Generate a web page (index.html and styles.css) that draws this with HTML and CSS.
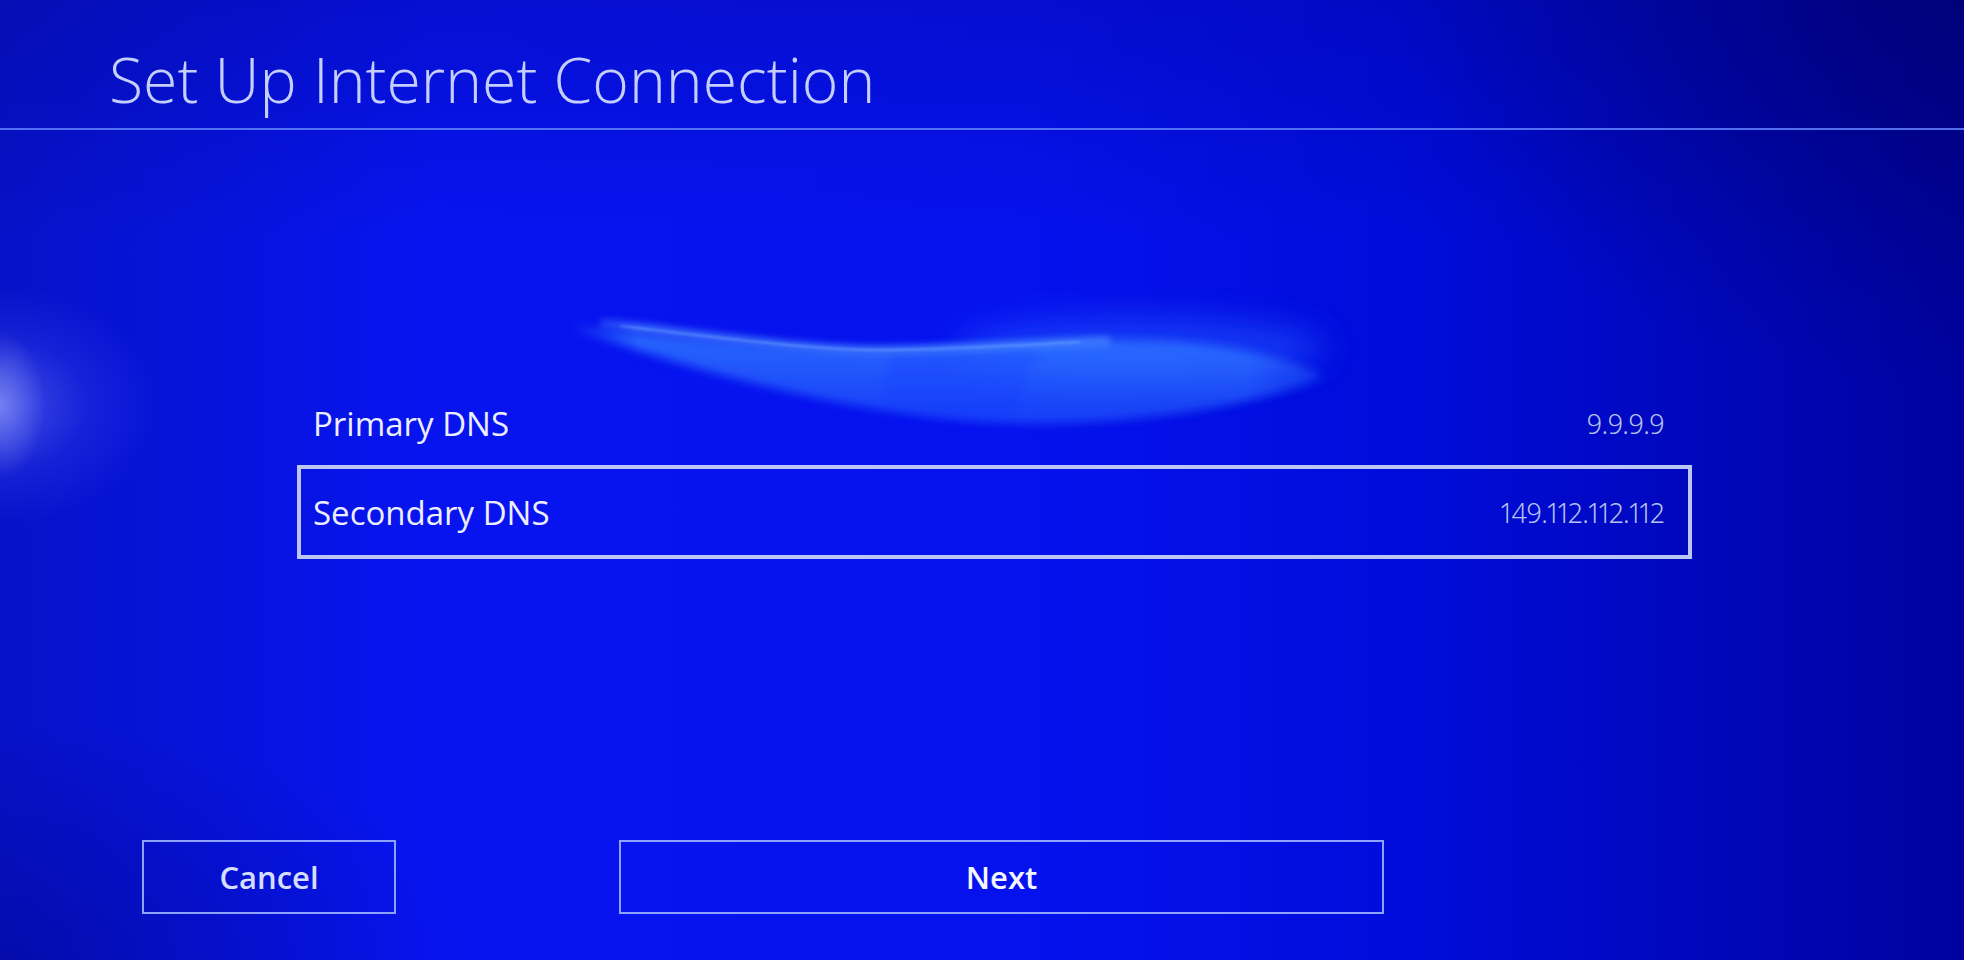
FILE: index.html
```html
<!DOCTYPE html>
<html lang="en">
<head>
<meta charset="utf-8">
<title>Set Up Internet Connection</title>
<link rel="stylesheet" href="styles.css">
</head>
<body>
<svg class="wave" width="1964" height="960" viewBox="0 0 1964 960" aria-hidden="true">
  <defs>
    <filter id="blurBig" x="-50%" y="-50%" width="200%" height="200%"><feGaussianBlur stdDeviation="16"/></filter>
    <filter id="blurMid" x="-20%" y="-50%" width="140%" height="200%"><feGaussianBlur stdDeviation="5"/></filter>
    <filter id="blurSoft" x="-10%" y="-50%" width="120%" height="200%"><feGaussianBlur stdDeviation="3"/></filter>
    <filter id="blurSmall" x="-10%" y="-50%" width="120%" height="200%"><feGaussianBlur stdDeviation="1"/></filter>
    <linearGradient id="lensFill" x1="0" y1="0" x2="0" y2="1">
      <stop offset="0" stop-color="#2e74ff" stop-opacity="0.9"/>
      <stop offset="0.6" stop-color="#2a6aff" stop-opacity="0.7"/>
      <stop offset="1" stop-color="#2462ff" stop-opacity="0.55"/>
    </linearGradient>
    <linearGradient id="lensFade" x1="0" y1="0" x2="1" y2="0">
      <stop offset="0" stop-color="#fff" stop-opacity="0"/>
      <stop offset="0.1" stop-color="#fff" stop-opacity="1"/>
      <stop offset="0.88" stop-color="#fff" stop-opacity="1"/>
      <stop offset="1" stop-color="#fff" stop-opacity="0.4"/>
    </linearGradient>
    <mask id="lensMask" maskUnits="userSpaceOnUse" x="0" y="0" width="1964" height="960">
      <rect x="560" y="280" width="780" height="160" fill="url(#lensFade)"/>
    </mask>
  </defs>
  <ellipse cx="1140" cy="348" rx="185" ry="30" fill="#2454ff" opacity="0.6" filter="url(#blurBig)"/>
  <g mask="url(#lensMask)">
    <path d="M575,326 C700,340 820,352 892,350 C1000,347 1100,334 1200,344 C1260,351 1300,362 1325,377 C1250,410 1100,428 1000,423 C850,415 700,372 575,330 Z" fill="url(#lensFill)" filter="url(#blurMid)"/>
    <path d="M892,352 C960,350 1000,348 1040,346 L1010,420 C960,420 920,415 880,408 Z" fill="#0a30ff" opacity="0.18" filter="url(#blurMid)"/>
    <path d="M600,323 C720,337 820,352 892,350 C960,349 1040,344 1110,341" fill="none" stroke="#4c8cff" stroke-opacity="0.6" stroke-width="10" filter="url(#blurSoft)"/>
    <path d="M620,326 C730,339 820,351 892,350 C960,349 1020,345 1080,342" fill="none" stroke="#78b0ff" stroke-opacity="0.45" stroke-width="2.5" filter="url(#blurSmall)"/>
  </g>
</svg>

<header class="title-bar">
  <h1 class="title">Set Up Internet Connection</h1>
</header>

<main class="settings">
  <ul class="dns-list">
    <li class="dns-row">
      <span class="dns-label">Primary DNS</span>
      <span class="dns-value">9.9.9.9</span>
    </li>
    <li class="dns-row is-selected">
      <span class="dns-label">Secondary DNS</span>
      <span class="dns-value">149.112.112.112</span>
    </li>
  </ul>
</main>

<footer class="actions">
  <button class="btn btn-cancel" type="button">Cancel</button>
  <button class="btn btn-next" type="button">Next</button>
</footer>
</body>
</html>
```

FILE: styles.css
```css
html, body {
  margin: 0;
  padding: 0;
}

body {
  position: relative;
  width: 1964px;
  height: 960px;
  overflow: hidden;
  font-family: "Open Sans", "Noto Sans", "Liberation Sans", sans-serif;
  color: #e8ecff;
  background:
    radial-gradient(ellipse 45px 75px at 0px 405px, rgba(175, 185, 255, 0.45), rgba(175, 185, 255, 0) 100%),
    radial-gradient(ellipse 160px 120px at 0px 405px, rgba(115, 130, 255, 0.55), rgba(80, 95, 255, 0.2) 55%, rgba(40, 50, 255, 0) 100%),
    radial-gradient(ellipse 760px 520px at 1964px 0px, rgba(0, 0, 100, 0.55), rgba(0, 0, 100, 0) 75%),
    radial-gradient(ellipse 600px 300px at 0px 960px, rgba(0, 0, 120, 0.35), rgba(0, 0, 120, 0) 80%),
    linear-gradient(180deg, rgba(0, 0, 120, 0.25) 0%, rgba(0, 0, 120, 0) 25%),
    linear-gradient(90deg, #0612c8 0%, #0714f0 22%, #0612ee 52%, #000cda 72%, #0006b4 90%, #00029e 100%);
}

.wave {
  position: absolute;
  left: 0;
  top: 0;
  pointer-events: none;
}

.title-bar {
  position: relative;
  height: 130px;
  padding: 0 0 0 109px;
  box-sizing: border-box;
  border-bottom: 2px solid rgba(95, 130, 255, 0.85);
}

.title {
  margin: 0;
  padding-top: 48px;
  font-size: 62.5px;
  line-height: 62px;
  font-weight: 300;
  color: #c4ceff;
  letter-spacing: 0;
}

.settings {
  position: relative;
  margin: 241px 0 0 297px;
  width: 1395px;
}

.dns-list {
  list-style: none;
  margin: 0;
  padding: 0;
}

.dns-row {
  display: flex;
  align-items: center;
  justify-content: space-between;
  height: 94px;
  box-sizing: border-box;
  padding: 0 24px 0 12px;
  border: 4px solid transparent;
}

.dns-row:first-child .dns-label,
.dns-row:first-child .dns-value {
  position: relative;
  top: 5px;
}

.dns-row.is-selected {
  border-color: #bcc6f2;
}

.dns-label {
  font-size: 33px;
  font-weight: 400;
  color: #eceeff;
}

.dns-value {
  font-family: "Noto Sans", "Open Sans", sans-serif;
  font-size: 27px;
  font-weight: 300;
  letter-spacing: -0.5px;
  color: #b8c2f2;
  font-variant-numeric: proportional-nums;
}

.actions {
  position: relative;
  display: flex;
  align-items: flex-start;
  gap: 223px;
  margin-top: 281px;
  padding-left: 142px;
}

.btn {
  height: 74px;
  box-sizing: border-box;
  background: transparent;
  border: 2px solid #8ea2ff;
  font-family: "Open Sans", "Noto Sans", "Liberation Sans", sans-serif;
  font-size: 31px;
  font-weight: 600;
  color: #d4ddff;
  padding: 0;
}

.btn-cancel {
  width: 254px;
}

.btn-next {
  width: 765px;
  color: #f4f6ff;
}
```
